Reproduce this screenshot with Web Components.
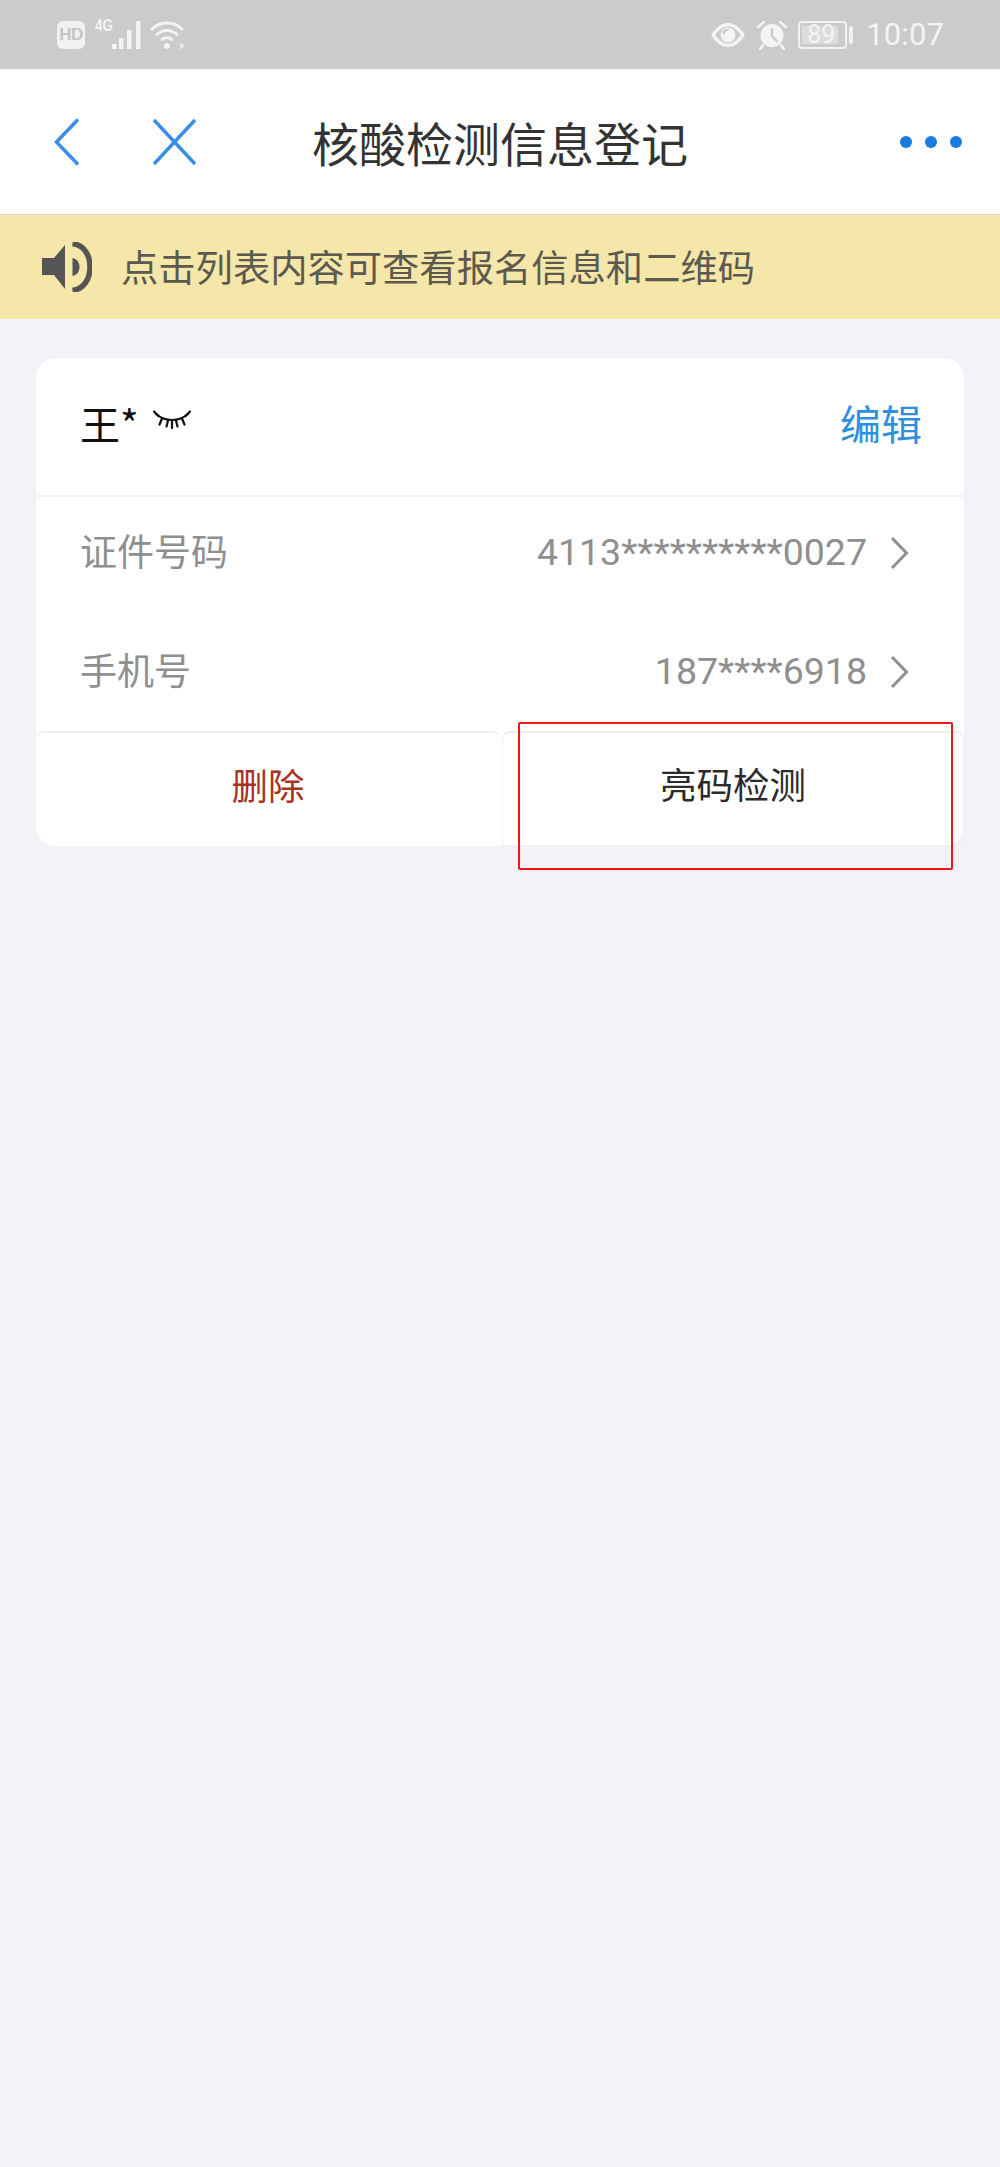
<!DOCTYPE html>
<html lang="zh">
<head>
<meta charset="utf-8">
<title>核酸检测信息登记</title>
<style>
    html, body {
        margin: 0;
        height: 2167px;
        overflow: hidden;
        background: #f2f2f7;
        font-family: Roboto, "Noto Sans CJK SC", sans-serif;
    }
</style>
</head>
<body>
<status-bar></status-bar>
<nav-bar>核酸检测信息登记</nav-bar>
<notice-bar>点击列表内容可查看报名信息和二维码</notice-bar>
<person-card name="王*">
    <info-row label="证件号码" value="4113**********0027"></info-row>
    <info-row label="手机号" value="187****6918"></info-row>
    <action-button slot="actions" tone="danger">删除</action-button>
    <action-button slot="actions">亮码检测</action-button>
</person-card>
<script>
class StatusBar extends HTMLElement {
    connectedCallback() {
        this.attachShadow({ mode: 'open' }).innerHTML = `
        <style>
            :host {
                display: flex;
                align-items: center;
                height: 69px;
                padding: 0 56px 0 57px;
                background: #cbcbcb;
                color: #f4f4f4;
                box-sizing: border-box;
            }
            .group { display: flex; align-items: center; }
            .spacer { flex: 1; }
            .hd {
                width: 28px;
                height: 28px;
                border-radius: 6px;
                background: #f1f1f1;
                color: #c4c4c4;
                font: 700 17px/28px "Liberation Sans", sans-serif;
                text-align: center;
                letter-spacing: -0.5px;
            }
            .net {
                position: relative;
                width: 50px;
                height: 28px;
                margin-left: 10px;
            }
            .net span {
                position: absolute;
                left: 0;
                top: -3px;
                font: 700 16px/16px "Liberation Sans", sans-serif;
                transform: scaleX(.85);
                transform-origin: left top;
            }
            .net svg { position: absolute; left: 0; top: 0; }
            .bat {
                position: relative;
                width: 49px;
                height: 28px;
                box-sizing: border-box;
                border: 2.5px solid #f1f1f1;
                border-radius: 4px;
                margin-left: 10px;
            }
            .bat i {
                position: absolute;
                left: 2px;
                top: 3px;
                bottom: 3px;
                width: 36px;
                background: #dcdcdc;
            }
            .bat span {
                position: absolute;
                left: 2px;
                right: 5px;
                top: 0;
                text-align: center;
                font: 400 25px/23px Roboto, sans-serif;
            }
            .nub {
                width: 4px;
                height: 18px;
                margin-left: 2px;
                border-radius: 2px;
                background: #f1f1f1;
            }
            .time {
                margin-left: 13px;
                font: 400 31px/1 Roboto, sans-serif;
                letter-spacing: .1px;
            }
        </style>
        <div class="group">
            <div class="hd">HD</div>
            <div class="net">
                <span>4G</span>
                <svg width="50" height="28" viewBox="0 0 50 28" fill="#f4f4f4">
                    <rect x="17" y="23" width="4.500" height="5" />
                    <rect x="24" y="17" width="4.500" height="11" />
                    <rect x="32" y="9" width="4.500" height="19" />
                    <rect x="41" y="0" width="4.500" height="28" />
                </svg>
            </div>
            <svg width="36" height="30" viewBox="0 0 36 30" fill="none" stroke="#f4f4f4" stroke-width="3" stroke-linecap="round" style="margin-left:5px">
                <path d="M2 9C10 1 24 1 32 9" />
                <path d="M7 14.500C13 9 21 9 27 14.500" />
                <path d="M12 19.500C15 17 19 17 22 19.500" />
                <circle cx="17" cy="26" r="3" fill="#f4f4f4" stroke="none" />
                <path d="M30 22l5 4-5 4z" fill="#e6e6e6" stroke="none" />
            </svg>
        </div>
        <div class="spacer"></div>
        <div class="group">
            <svg width="36" height="26" viewBox="0 0 36 26">
                <path d="M1 13C8 3 13 1 18 1s10 2 17 12c-7 10-12 12-17 12S8 23 1 13z" fill="#f4f4f4" />
                <path d="M5 13C10 6.500 14 4.500 18 4.500S26 6.500 31 13c-5 6.500-9 8.500-13 8.500S10 19.500 5 13z" fill="#cbcbcb" />
                <circle cx="18" cy="13" r="7.500" fill="#f4f4f4" />
                <path d="M12 10c2-3 6-4 8-2-3 0-5 2-6 5z" fill="#cbcbcb" />
            </svg>
            <svg width="32" height="30" viewBox="0 0 32 30" style="margin-left:10px">
                <circle cx="16" cy="15.500" r="11.500" fill="#f4f4f4" />
                <path d="M16 8v8l5.500 6" fill="none" stroke="#cbcbcb" stroke-width="2.500" />
                <path d="M2 7l6-5M30 7l-6-5M7 25l-3 4M25 25l3 4" fill="none" stroke="#f4f4f4" stroke-width="2.500" stroke-linecap="round" />
            </svg>
            <div class="bat"><i></i><span>89</span></div>
            <div class="nub"></div>
            <div class="time">10:07</div>
        </div>`;
    }
}

class NavBar extends HTMLElement {
    connectedCallback() {
        this.attachShadow({ mode: 'open' }).innerHTML = `
        <style>
            :host {
                display: grid;
                grid-template-columns: 54px 25px 73px 45px 1fr 100px;
                align-items: center;
                height: 146px;
                background: #fff;
                border-bottom: 1px solid #d9d9d6;
                box-sizing: border-box;
                color: #333;
            }
            svg { display: block; }
            .title {
                grid-column: 5;
                margin-left: 115px;
                font: 400 47px/1 "Noto Sans CJK SC", sans-serif;
                white-space: nowrap;
            }
            .dots {
                grid-column: 6;
                display: flex;
                gap: 13px;
            }
            .dots i {
                width: 12px;
                height: 12px;
                border-radius: 50%;
                background: #1a7be0;
            }
            .back { grid-column: 2; }
            .close { grid-column: 4; }
        </style>
        <svg class="back" width="25" height="48" viewBox="0 0 25 48" fill="none" stroke="#3a8ee6" stroke-width="3.500">
            <path d="M24 1.500L2.500 24 24 46.500" />
        </svg>
        <svg class="close" width="45" height="48" viewBox="0 0 45 48" fill="none" stroke="#3a8ee6" stroke-width="3.500">
            <path d="M2 2l41 44M43 2L2 46" />
        </svg>
        <div class="title"><slot></slot></div>
        <div class="dots"><i></i><i></i><i></i></div>`;
    }
}

class NoticeBar extends HTMLElement {
    connectedCallback() {
        this.attachShadow({ mode: 'open' }).innerHTML = `
        <style>
            :host {
                display: flex;
                align-items: center;
                gap: 29px;
                height: 104px;
                padding-left: 41px;
                background: #f5e6a9;
                color: #5c5a4e;
                font: 400 37.300px/1 "Noto Sans CJK SC", sans-serif;
            }
        </style>
        <svg width="51" height="50" viewBox="0 0 51 50" fill="#555">
            <path d="M1 16h12L24 3v44L13 33H1z" />
            <path d="M31.500 16c5 1 7 5 7 9s-2 8-7 9z" />
            <path d="M31.500 1.500C43 3 49 13 49 25s-6 22-17.500 23.500" fill="none" stroke="#555" stroke-width="5.500" />
        </svg>
        <span><slot></slot></span>`;
    }
}

class PersonCard extends HTMLElement {
    connectedCallback() {
        const name = this.getAttribute('name') || '';
        this.attachShadow({ mode: 'open' }).innerHTML = `
        <style>
            :host {
                display: block;
                position: relative;
                width: 928px;
                height: 488px;
                margin: 39px 0 0 36px;
                border-radius: 20px;
                background: #fff;
            }
            .head {
                display: flex;
                align-items: center;
                height: 129px;
                padding: 0 42px 8px 44px;
                border-bottom: 2px solid #f3f3f5;
            }
            .name {
                color: #111;
                font: 400 40px/1 "Noto Sans CJK SC", sans-serif;
            }
            .edit {
                margin-left: auto;
                color: #2e8fe0;
                font: 400 41px/1 "Noto Sans CJK SC", sans-serif;
            }
            svg { margin: -6px 0 0 14px; }
            .rows { display: flex; flex-direction: column; height: 238px; margin-top: -4px; }
            .actions {
                display: grid;
                grid-template-columns: 464px 1fr;
                gap: 2px;
                height: 115px;
            }
            .mark {
                position: absolute;
                left: 482px;
                top: 364px;
                width: 435px;
                height: 148px;
                box-sizing: border-box;
                border: 2.500px solid #f51414;
                border-radius: 2px;
                pointer-events: none;
            }
        </style>
        <div class="head">
            <span class="name">${name}</span>
            <svg width="38" height="19" viewBox="0 0 38 19" fill="none" stroke="#111" stroke-width="2.200" stroke-linecap="round">
                <path d="M3 4c9 8 23 8 32 0" />
                <path d="M1 1.500L5.500 6M37 1.500L32.500 6M9 8.500L6.500 14.500M29 8.500L31.500 14.500M15 10.500L13.500 16.500M23 10.500L24.500 16.500M19 11V18" />
            </svg>
            <span class="edit">编辑</span>
        </div>
        <div class="rows"><slot></slot></div>
        <div class="actions"><slot name="actions"></slot></div>
        <div class="mark"></div>`;
    }
}

class InfoRow extends HTMLElement {
    connectedCallback() {
        const label = this.getAttribute('label') || '';
        const value = this.getAttribute('value') || '';
        this.attachShadow({ mode: 'open' }).innerHTML = `
        <style>
            :host {
                display: flex;
                align-items: center;
                height: 119px;
                padding: 0 55px 0 44px;
                color: #8f8f8f;
            }
            .label { font: 400 37px/1 "Noto Sans CJK SC", sans-serif; padding-bottom: 5px; }
            .value {
                margin-left: auto;
                font: 400 37.500px/1 Roboto, sans-serif;
            }
            svg { margin-left: 23px; flex: none; }
        </style>
        <span class="label">${label}</span>
        <span class="value">${value}</span>
        <svg width="19" height="34" viewBox="0 0 19 34" fill="none" stroke="#8f8f8f" stroke-width="3">
            <path d="M2 2l14.500 15L2 32" />
        </svg>`;
    }
}

class ActionButton extends HTMLElement {
    connectedCallback() {
        this.attachShadow({ mode: 'open' }).innerHTML = `
        <style>
            :host {
                display: flex;
                align-items: center;
                justify-content: center;
                box-sizing: border-box;
                border-top: 2px solid #eeeef1;
                border-radius: 8px 8px 0 0;
                padding-bottom: 9px;
                color: #2b2b2b;
                font: 400 36.500px/1 "Noto Sans CJK SC", sans-serif;
            }
            :host([tone="danger"]) { color: #a8321f; }
            :host(:not([tone])) {
                border-left: 1px solid #f0f0f2;
                border-right: 1px solid #f0f0f2;
                border-bottom: 1px solid #f0f0f2;
            }
        </style>
        <slot></slot>`;
    }
}

customElements.define('status-bar', StatusBar);
customElements.define('nav-bar', NavBar);
customElements.define('notice-bar', NoticeBar);
customElements.define('person-card', PersonCard);
customElements.define('info-row', InfoRow);
customElements.define('action-button', ActionButton);
</script>
</body>
</html>
